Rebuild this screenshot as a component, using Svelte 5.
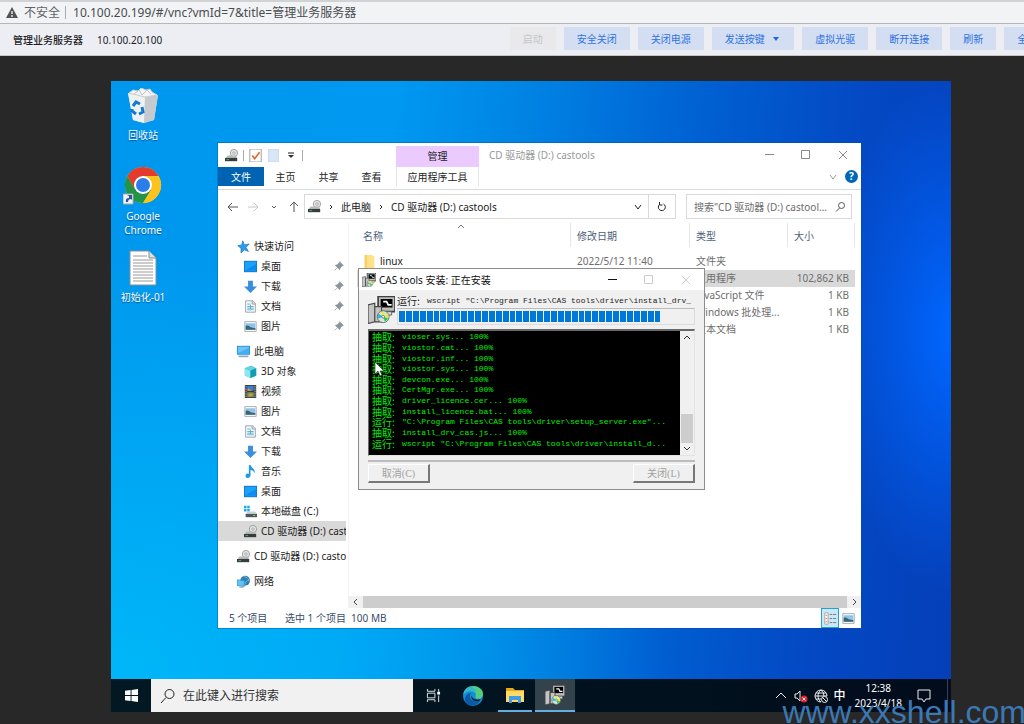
<script lang="ts">
  // Browser console for a virtual machine: address bar, VM toolbar and the
  // remote desktop with its two open windows.
  type NavItem = { icon: string; label: string; top?: boolean; pin?: boolean; active?: boolean };

  const actions = ["安全关闭", "关闭电源", "发送按键", "虚拟光驱", "断开连接", "刷新", "全屏"];

  const navGroups: NavItem[][] = [
    [
      { icon: "star", label: "快速访问", top: true },
      { icon: "desktop", label: "桌面", pin: true },
      { icon: "down", label: "下载", pin: true },
      { icon: "doc", label: "文档", pin: true },
      { icon: "picture", label: "图片", pin: true },
    ],
    [
      { icon: "pc", label: "此电脑", top: true },
      { icon: "cube", label: "3D 对象" },
      { icon: "film", label: "视频" },
      { icon: "picture", label: "图片" },
      { icon: "doc", label: "文档" },
      { icon: "down", label: "下载" },
      { icon: "music", label: "音乐" },
      { icon: "desktop", label: "桌面" },
      { icon: "disk", label: "本地磁盘 (C:)" },
      { icon: "cd", label: "CD 驱动器 (D:) castools", active: true },
    ],
    [{ icon: "cd", label: "CD 驱动器 (D:) castools", top: true }],
    [{ icon: "network", label: "网络", top: true }],
  ];

  const files = [
    { name: "linux", date: "2022/5/12 11:40", type: "文件夹", size: "" },
    { name: "", date: "", type: "应用程序", size: "102,862 KB", selected: true },
    { name: "", date: "", type: "JavaScript 文件", size: "1 KB" },
    { name: "", date: "", type: "Windows 批处理...", size: "1 KB" },
    { name: "", date: "", type: "文本文档", size: "1 KB" },
  ];

  const log = [
    ["抽取:", "vioser.sys... 100%"],
    ["抽取:", "viostor.cat... 100%"],
    ["抽取:", "viostor.inf... 100%"],
    ["抽取:", "viostor.sys... 100%"],
    ["抽取:", "devcon.exe... 100%"],
    ["抽取:", "CertMgr.exe... 100%"],
    ["抽取:", "driver_licence.cer... 100%"],
    ["抽取:", "install_licence.bat... 100%"],
    ["运行:", '"C:\\Program Files\\CAS tools\\driver\\setup_server.exe"...'],
    ["抽取:", "install_drv_cas.js... 100%"],
    ["运行:", 'wscript "C:\\Program Files\\CAS tools\\driver\\install_d...'],
  ];
  const current = 'wscript "C:\\Program Files\\CAS tools\\driver\\install_drv_';
  const blocks = Array(38);
  const progress = 89;

  let url = $state("10.100.20.199/#/vnc?vmId=7&title=管理业务服务器");
</script>

{#snippet icon(name: string)}
  <svg class="icon" viewBox="0 0 16 16" aria-hidden="true">
    {#if name === "star"}
      <path d="M7 1l2 5 6-1-4 4 3 5-5-2-4 4V10L1 7l5-1z" fill="#2f9be8" stroke="#1d7cc8" />
    {:else if name === "desktop"}
      <path d="M0 1h16v14H0z" fill="#0d74d0" />
      <path d="M1 2h14v12H1z" fill="#1ba1fa" />
      <path d="M1 13L15 5v8z" fill="#0c8cec" />
    {:else if name === "down"}
      <path d="M5 1h6v7h5l-8 8-8-8h5z" fill="#3a8ee0" />
    {:else if name === "doc"}
      <path d="M2 1h9l3 3v11H2z" fill="#f7f9fa" stroke="#8c979d" />
      <path d="M10 1v4h4" fill="#dbe1e4" stroke="#8c979d" />
      <path d="M4 5h4m-4 3h8m-8 2h8m-8 2h8M8 6v5" stroke="#4aa6cf" />
    {:else if name === "picture"}
      <path d="M1 2h14v12H1z" fill="#fff" stroke="#969da2" />
      <path d="M2 4h12v8H2z" fill="#8fc3ea" />
      <path d="M2 7q4-1 6 2l6 1v2H2z" fill="#396574" />
    {:else if name === "pc"}
      <path d="M0 1h16v11H0z" fill="#1c8fd8" />
      <path d="M1 2h14v9H1z" fill="#6cc5f6" />
      <path d="M1 10L15 3v8H1z" fill="#43aef0" />
      <path d="M2 14h12" stroke="#8fa4b4" stroke-width="2" />
    {:else if name === "cube"}
      <path d="M1 4l8-3 6 3v9l-7 3-7-3z" fill="#2bb8cb" />
      <path d="M1 4l7 3v9l-7-3z" fill="#8ce6ee" />
      <path d="M1 4l8-3 6 3-7 3z" fill="#5ed4e2" />
      <path d="M8 7l7-3v9l-7 3z" fill="#159daf" />
    {:else if name === "film"}
      <path d="M1 0h14v16H1z" fill="#39393d" />
      <path d="M4 1h8v6H4z" fill="#3a7fd0" />
      <path d="M4 9h8v6H4z" fill="#7e9b55" />
      <path d="M5 4l5 3H4zM7 10l4 2-5 2z" fill="#e79a3b" />
      <path d="M2.5 1v14m11-14v14" stroke="#d4d4d4" stroke-dasharray="2 1" />
    {:else if name === "music"}
      <path d="M6 0h2c1 4 6 4 5 10-1-3-3-4-5-4v7c0 4-7 4-6 0 0-2 2-3 4-2z" fill="#1d99ee" />
    {:else if name === "disk"}
      <path d="M0 1h3v3H0zm4 0h3v3H4zM0 5h3v3H0zm4 0h3v3H4z" fill="#18a6e6" />
      <path d="M4 8h10l2 3H2z" fill="#cdd1d3" />
      <path d="M2 11h14v4H2z" fill="#50565a" />
      <path d="M11 13h3" stroke="#56ef61" />
    {:else if name === "cd"}
      <circle cx="11" cy="5" r="4.5" fill="#e6e6e6" stroke="#8e9192" />
      <circle cx="11" cy="5" r="1.5" fill="#fff" stroke="#969696" />
      <path d="M3 8h10l2 3H1z" fill="#b7babb" />
      <path d="M0 11h15v4H0z" fill="#393c3e" />
      <path d="M2 13h3" stroke="#38d94c" />
    {:else if name === "network"}
      <circle cx="10" cy="7" r="6" fill="#2f7fb5" />
      <path d="M8 2q5 0 7 5-4-1-5 4" fill="none" stroke="#7fc3dd" />
      <path d="M0 6l9 1v7l-9-1z" fill="#5cc6f7" stroke="#3a93c4" />
      <path d="M3 15h5" stroke="#71868f" />
    {:else if name === "folder"}
      <path d="M2 0h9l3 2v14H2z" fill="#ffe18a" />
      <path d="M2 0h3v16H2z" fill="#f5cf68" />
    {:else if name === "check"}
      <path d="M1 0h14v16H1z" fill="#fff" stroke="#8e8e8e" />
      <path d="M4 8l3 4 6-8" fill="none" stroke="#e7622b" stroke-width="2" />
    {:else if name === "blank"}
      <path d="M2 0h12v16H2z" fill="#d9e6f8" stroke="#c3d2e7" />
    {:else if name === "pin"}
      <path d="M9 1l6 6-2 1-3 3-1 3-7-7 3-1 3-3zM5 11l-4 4" fill="#8b959f" stroke="#8b959f" />
    {:else if name === "details"}
      <path d="M1 1h4v14H1z" fill="#fff" stroke="#a59a94" />
      <path d="M2 4h2m-2 4h2m-2 4h2" stroke="#e26045" />
      <path d="M7 3h3m1 0h4M7 8h3m1 0h4M7 13h3m1 0h4" stroke="#5a6870" />
    {:else if name === "installer"}
      <path d="M6 0h10v9H6z" fill="#bdbdbd" stroke="#404040" />
      <path d="M7.5 1.5h7v5h-7z" fill="#000" />
      <path d="M9 3h2l1 2h2" stroke="#fff" fill="none" />
      <path d="M6 9h8v2H6z" fill="#ddd" stroke="#555" stroke-width=".5" />
      <path d="M0 5l4-1v11l-4 1zM4 6h4v9H4z" fill="#c4c4c4" stroke="#444" stroke-width=".7" />
      <circle cx="9" cy="12" r="3.5" fill="#d6e7d8" stroke="#5c665f" stroke-width=".5" />
      <path d="M9 12L7 9h3zM9 12l3-2v3z" fill="#ece94a" />
      <path d="M9 12l3 1-2 2z" fill="#28c85a" />
      <path d="M9 12l-3 1V10z" fill="#22b4e6" />
      <circle cx="9" cy="12" r=".8" fill="#fff" stroke="#555" stroke-width=".4" />
    {/if}
  </svg>
{/snippet}

{#snippet glyph(d: string)}
  <svg class="glyph" viewBox="0 0 12 12" aria-hidden="true"><path {d} /></svg>
{/snippet}

<div class="page">
  <header class="browser">
    <svg class="warn" viewBox="0 0 12 12" aria-hidden="true">
      <path d="M6 0l6 11H0z" fill="#505357" />
      <path d="M6 4v3m0 1v2" stroke="#f1f3f4" stroke-width="1.3" />
    </svg>
    <span class="insecure">不安全</span>
    <input class="url" aria-label="地址" bind:value={url} />
  </header>

  <div class="toolbar">
    <div class="vm"><strong>管理业务服务器</strong><span>10.100.20.100</span></div>
    <button class="action" disabled>启动</button>
    {#each actions as label}
      <button class="action">
        {label}
        {#if label === "发送按键"}<span class="caret"></span>{/if}
      </button>
    {/each}
  </div>

  <main class="remote">
    <div class="wallpaper">
      <div class="shortcuts">
        <button class="shortcut">
          <svg viewBox="0 0 36 36" aria-hidden="true">
            <path d="M3 5l30 2-4 25-10 3-11-3z" fill="#dfe3e5" />
            <path d="M3 5l17 4-1 26-11-3z" fill="#eef1f2" />
            <path d="M20 9l13-2-4 25-10 3z" fill="#c4cacd" />
            <path d="M4 5l4-3 5 1 3-3 5 2 4-1 2 3 5 3-12 2z" fill="#f5f5f5" stroke="#c8cdcf" />
            <path d="M9 6l5-4 3 5 5-5 4 4" fill="none" stroke="#bdc4c7" />
            <path d="M8 18l3-4 4 2m2 3l1 5-4 2m-3 0l-4-3v-2" fill="none" stroke="#1878cf" stroke-width="3" />
          </svg>
          回收站
        </button>
        <button class="shortcut chrome">
          <svg viewBox="0 0 40 40" aria-hidden="true">
            <circle cx="20" cy="20" r="18" fill="#fcc31e" />
            <path d="M4.4 11A18 18 0 0 0 20 38l8-13-8-5-8 4z" fill="#229447" />
            <path d="M20 11h15.6A18 18 0 0 1 20 38l8-13z" fill="#fcc31e" />
            <path d="M4.4 11A18 18 0 0 1 35.6 11H20l-8 13z" fill="#e33b2e" />
            <circle cx="20" cy="20" r="9" fill="#fff" />
            <circle cx="20" cy="20" r="7" fill="#2b7de9" />
            <path d="M0 29h10v10H0z" fill="#f2f2f2" stroke="#aaa" />
            <path d="M3 37q-1-4 3-4v-2l-2-1h5v5l-1-1q-3 0-3 3z" fill="#245b9d" />
          </svg>
          Google<br />Chrome
        </button>
        <button class="shortcut">
          <svg viewBox="0 0 36 36" aria-hidden="true">
            <path d="M5 1h19l7 7v27H5z" fill="#fff" stroke="#888f92" />
            <path d="M24 1v7h7" fill="#dce0e2" stroke="#888f92" />
            <path d="M8 6h14M8 10h20M8 13h20M8 16h20M8 19h20M8 22h20M8 25h20M8 28h20M8 31h20" stroke="#999" />
          </svg>
          初始化-01
        </button>
      </div>

      <section class="explorer" aria-label="CD 驱动器 (D:) castools">
        <div class="titlebar">
          <div class="quick">
            {@render icon("cd")}<i></i>{@render icon("check")}{@render icon("blank")}
            <svg class="glyph" viewBox="0 0 12 12" aria-hidden="true">
              <path d="M3 4h6" /><path d="M3 6h6L6 9z" fill="#333" stroke="none" />
            </svg><i></i>
          </div>
          <div class="manage">管理</div>
          <span class="title">CD 驱动器 (D:) castools</span>
          <div class="controls">
            <button aria-label="最小化">{@render glyph("M2 5.5h9")}</button>
            <button aria-label="最大化">{@render glyph("M1.5 1.5h8v8h-8z")}</button>
            <button aria-label="关闭">{@render glyph("M2 2l8 8M10 2l-8 8")}</button>
          </div>
        </div>

        <div class="tabs">
          <div class="tabs__main">
            <button class="tab tab--file">文件</button>
            <button class="tab">主页</button>
            <button class="tab">共享</button>
            <button class="tab">查看</button>
          </div>
          <button class="tab tab--tools">应用程序工具</button>
          <div class="tabs__help">
            <button aria-label="展开功能区">{@render glyph("M3 4l3 4 3-4")}</button>
            <button class="help" aria-label="帮助">?</button>
          </div>
        </div>

        <div class="location">
          <div class="arrows">
            <button aria-label="后退">{@render glyph("M11 6H1m4-4L1 6l4 4")}</button>
            <button aria-label="前进" disabled>{@render glyph("M1 6h10M7 2l4 4-4 4")}</button>
            <button aria-label="最近">{@render glyph("M4 5l2 2 2-2")}</button>
            <button aria-label="向上">{@render glyph("M6 11V1M2 5l4-4 4 4")}</button>
          </div>
          <div class="crumbs">
            {@render icon("cd")}
            {@render glyph("M5 4l2 2-2 2")}
            <button>此电脑</button>
            {@render glyph("M5 4l2 2-2 2")}
            <button>CD 驱动器 (D:) castools</button>
            <button class="crumbs__drop" aria-label="历史">{@render glyph("M3 4l3 4 3-4")}</button>
            <button class="crumbs__refresh" aria-label="刷新">{@render glyph("M7.5 3A3.500 3.500 0 1 1 3.500 3.500M3.500 1v3h3")}</button>
          </div>
          <div class="find">
            <input aria-label="搜索" placeholder={'搜索"CD 驱动器 (D:) castool...'} />
            {@render glyph("M10.500 4.500a3 3 0 1 1-6 0 3 3 0 0 1 6 0M5.500 7L2 10.500")}
          </div>
        </div>

        <div class="body">
          <nav class="tree">
            {#each navGroups as group}
              <ul>
                {#each group as item}
                  <li class:top={item.top} class:active={item.active}>
                    {@render icon(item.icon)}
                    <span>{item.label}</span>
                    {#if item.pin}<b>{@render icon("pin")}</b>{/if}
                  </li>
                {/each}
              </ul>
            {/each}
          </nav>
          <div class="content">
            <table>
              <thead>
                <tr>
                  <th><div>名称<span class="sort">{@render glyph("M3 7l3-3 3 3")}</span></div></th>
                  <th class="date"><div>修改日期</div></th>
                  <th class="type"><div>类型</div></th>
                  <th class="size"><div>大小</div></th>
                </tr>
              </thead>
              <tbody>
                {#each files as file}
                  <tr class:selected={file.selected}>
                    <td>
                      {#if file.name}<div class="name">{@render icon("folder")}{file.name}</div>{/if}
                    </td>
                    <td>{file.date}</td>
                    <td>{file.type}</td>
                    <td class="num">{file.size}</td>
                  </tr>
                {/each}
              </tbody>
            </table>
            <div class="hscroll">
              {@render glyph("M8 3L5 6l3 3")}<span></span>{@render glyph("M4 3l3 3-3 3")}
            </div>
          </div>
        </div>

        <footer class="status">
          <span class="status__count">5 个项目</span>
          <span>选中 1 个项目&nbsp; 100 MB</span>
          <div class="views">
            <button class="on" aria-label="详细信息">{@render icon("details")}</button>
            <button aria-label="大图标">{@render icon("picture")}</button>
          </div>
        </footer>
      </section>

      <section class="setup" aria-label="CAS tools 安装">
        <div class="setup__title">
          {@render icon("installer")}
          <span>CAS tools 安装: 正在安装</span>
          <div class="controls">
            <button class="black" aria-label="最小化">{@render glyph("M2 5.5h9")}</button>
            <button aria-label="最大化" disabled>{@render glyph("M1.5 1.5h8v8h-8z")}</button>
            <button aria-label="关闭" disabled>{@render glyph("M2 2l8 8M10 2l-8 8")}</button>
          </div>
        </div>
        <div class="setup__body">
          <div class="running">
            {@render icon("installer")}
            <div class="running__info">
              <div class="line"><span>运行:</span>{current}</div>
              <div class="bar" role="progressbar" aria-label="安装进度" aria-valuenow={progress}>
                <div class="bar__fill" style="width: {progress}%">
                  {#each blocks as _}<i></i>{/each}
                </div>
              </div>
            </div>
          </div>
          <div class="output">
            <div class="log">
              {#each log as [verb, text]}
                <div class="line"><span>{verb}</span>{text}</div>
              {/each}
            </div>
            <div class="vscroll">
              {@render glyph("M3 8l3-3 3 3")}<span></span>{@render glyph("M3 4l3 3 3-3")}
            </div>
          </div>
          <div class="setup__buttons">
            <button disabled>取消<span>(C)</span></button>
            <button disabled>关闭<span>(L)</span></button>
          </div>
        </div>
      </section>

      <svg class="cursor" viewBox="0 0 10 16" aria-hidden="true">
        <path d="M1 1v12l3-3 2 5 2-1-2-4h4z" fill="#fff" stroke="#222" stroke-width=".6" />
      </svg>
    </div>

    <footer class="taskbar">
      <button class="start" aria-label="开始">
        <svg viewBox="0 0 14 14" aria-hidden="true">
          <path d="M0 2l6-1v5.5H0zM7 1l7-1v6.5H7zM0 7.5h6V13l-6-1zM7 7.5h7V14l-7-1z" fill="#fff" />
        </svg>
      </button>
      <label class="search">
        <svg viewBox="0 0 16 16" aria-hidden="true">
          <path d="M14 6a4.5 4.5 0 1 1-9 0 4.5 4.5 0 0 1 9 0M6 9.5L1 15" fill="none" stroke="#222" />
        </svg>
        <input aria-label="搜索" placeholder="在此键入进行搜索" />
      </label>
      <button class="task" aria-label="任务视图">
        <svg viewBox="0 0 16 16" aria-hidden="true">
          <path d="M1.5 1v2.5h8V1M1.5 5.5h8v5h-8zM1.5 15v-2.5h8V15M13.5 1v3m0 4v7" fill="none" stroke="#e4e9eb" />
          <path d="M12 4h3v3h-3z" fill="#fff" />
        </svg>
      </button>
      <button class="task" aria-label="Edge">
        <svg class="big" viewBox="0 0 20 20" aria-hidden="true">
          <circle cx="10" cy="10" r="10" fill="#138bd5" />
          <path d="M0 9C1 3 5 0 10 0c6 0 10 4 10 8s-3 6-6 5c-2-1-2-2-1-3 0-5-8-7-13-1z" fill="#35b9c4" />
          <path d="M11 0c6 1 9 4 9 8 0 3-3 5-6 4-2-1-2-2-1-3 1-3 0-6-4-8z" fill="#5bd36c" opacity=".8" />
          <path d="M8 7c-3 4 0 10 9 8-3 5-9 6-13 3-4-4-2-10 4-11z" fill="#0c59a4" />
          <path d="M9 9c-1 3 3 6 9 4l-2 2c-5 1-9-2-7-6z" fill="#01121b" />
        </svg>
      </button>
      <button class="task task--open" aria-label="文件资源管理器">
        <svg class="big" viewBox="0 0 20 20" aria-hidden="true">
          <path d="M1 3h7l2 2h9v12H1z" fill="#e8a817" />
          <path d="M1 6h18v11H1z" fill="#ffda67" />
          <path d="M4 11h12v7h-3v-3H7v3H4z" fill="#3f9ce5" />
        </svg>
      </button>
      <button class="task task--active" aria-label="CAS tools 安装">{@render icon("installer")}</button>
      <div class="tray">
        <svg viewBox="0 0 14 14" aria-hidden="true"><path d="M2 9l5-5 5 5" /></svg>
        <svg viewBox="0 0 14 14" aria-hidden="true">
          <path d="M1 5h2l3-3v10L3 9H1z" />
          <circle cx="10" cy="10" r="3.5" fill="#e2202c" stroke="none" />
          <path d="M8.5 8.5l3 3m0-3l-3 3" />
        </svg>
        <svg viewBox="0 0 14 14" aria-hidden="true">
          <path d="M13 7A6 6 0 1 0 7 13M1 7h12M2 4h10M2 10h5M7 1C3 4 3 10 7 13M7 1q3 2 3 6" />
          <circle cx="10.5" cy="10.5" r="3" fill="#01121b" /><path d="M8.5 8.5l4 4" />
        </svg>
        <span class="ime">中</span>
        <time>12:38<br />2023/4/18</time>
        <svg viewBox="0 0 14 14" aria-hidden="true"><path d="M1 1h12v9H9l-2 3-2-3H1z" /></svg>
      </div>
    </footer>
  </main>

  <div class="watermark">www.xxshell.com</div>
</div>

<style>
  :global(body) {
    margin: 0;
    background: #282828;
  }
  .page {
    position: relative;
    min-height: 100vh;
    overflow: hidden;
    background: #282828;
    font: 10px / 14px "Noto Sans", "Noto Sans CJK SC", sans-serif;
    color: #1c1c1c;
  }
  .page * {
    box-sizing: border-box;
  }
  button,
  input {
    font: inherit;
    color: inherit;
    margin: 0;
    padding: 0;
    border: 0;
    background: none;
    white-space: nowrap;
  }
  input {
    min-width: 0;
    outline: none;
  }
  ul {
    list-style: none;
    margin: 0;
    padding: 0;
  }
  svg {
    display: block;
    flex: none;
  }
  .icon {
    width: 13px;
    height: 13px;
  }
  .glyph {
    width: 12px;
    height: 12px;
    fill: none;
    stroke: currentColor;
  }

  .browser {
    display: flex;
    align-items: center;
    height: 24px;
    padding-left: 6px;
    border-top: 2px solid #d0d2d4;
    border-bottom: 1px solid #b5b7b9;
    background: #f1f3f4;
    font-size: 12px;
    color: #5f6368;
  }
  .warn {
    width: 12px;
    height: 12px;
    margin-right: 6px;
  }
  .insecure {
    padding-right: 5px;
    border-right: 1px solid #a9acb0;
    line-height: 13px;
  }
  .url {
    flex: 1;
    padding-left: 7px;
    color: #4a4d51;
  }

  .toolbar {
    display: flex;
    align-items: flex-start;
    gap: 8px;
    height: 32px;
    padding-top: 3px;
    border-bottom: 1px solid #c4c5ca;
    background: #edeef4;
  }
  .vm {
    display: flex;
    flex: none;
    gap: 14px;
    width: 49%;
    padding-left: 13px;
    line-height: 27px;
  }
  .vm strong {
    font-weight: 500;
  }
  .action {
    flex: none;
    height: 23px;
    padding: 0 13px;
    background: #d4def2;
    color: #2f73e2;
  }
  .action:disabled {
    background: #e9e9eb;
    color: #c4c5c8;
  }
  .caret {
    display: inline-block;
    margin: 0 2px 2px 6px;
    border: 3px solid transparent;
    border-top: 4px solid #1f67df;
    border-bottom: 0;
  }

  .remote {
    margin: 25px 73px 12px 111px;
  }
  .wallpaper {
    position: relative;
    height: 598px;
    background:
      radial-gradient(ellipse 120px 260px at 100% 42%, #0066ff 0%, rgba(0, 96, 255, 0) 100%),
      radial-gradient(ellipse 560px 420px at 0% 100%, rgba(0, 186, 250, 0.9), rgba(0, 180, 250, 0)),
      linear-gradient(96deg, #0098ee 0%, #0098f0 32%, #0084e4 46%, #0060d2 66%, #0448c4 84%, #043fb8 100%);
  }
  .shortcuts {
    display: flex;
    flex-direction: column;
    align-items: center;
    gap: 23px;
    width: 64px;
    padding-top: 7px;
    color: #fff;
  }
  .shortcut {
    text-shadow: 0 1px 1px rgba(0, 40, 90, 0.6);
  }
  .shortcut svg {
    width: 36px;
    height: 36px;
    margin: 0 auto 4px;
  }
  .shortcut.chrome {
    margin-bottom: -10px;
  }
  .shortcut.chrome svg {
    width: 40px;
    height: 40px;
  }

  .controls {
    display: flex;
    margin-left: auto;
    color: #8a8a8a;
  }
  .controls button {
    width: 37px;
    display: flex;
    justify-content: center;
  }
  .controls button:disabled {
    color: #ccc;
  }
  .controls .black {
    color: #111;
  }

  .explorer {
    position: absolute;
    left: 107px;
    top: 62px;
    width: 643px;
    background: #fff;
    box-shadow: 0 0 0 1px rgba(0, 80, 160, 0.4);
  }
  .titlebar {
    display: flex;
    align-items: center;
    height: 24px;
  }
  .quick {
    display: flex;
    align-items: center;
    gap: 5px;
    width: 178px;
    padding-left: 7px;
  }
  .quick i {
    width: 1px;
    height: 11px;
    background: #aaa;
  }
  .manage {
    align-self: flex-end;
    width: 83px;
    height: 21px;
    line-height: 21px;
    text-align: center;
    background: #ebcbff;
  }
  .title {
    padding-left: 10px;
    color: #999;
  }
  .tabs {
    display: flex;
    height: 23px;
    padding-bottom: 3px;
    border-bottom: 1px solid #dadbdc;
  }
  .tabs__main {
    display: flex;
    width: 178px;
  }
  .tab {
    width: 43px;
  }
  .tab--file {
    width: 46px;
    background: #0063b1;
    color: #fff;
  }
  .tab--tools {
    width: 83px;
    border: 1px solid #e5e5e5;
    border-width: 0 1px;
  }
  .tabs__help {
    display: flex;
    align-items: center;
    gap: 6px;
    margin-left: auto;
    padding-right: 3px;
    color: #999;
  }
  .help {
    width: 13px;
    height: 13px;
    border-radius: 50%;
    background: #0067b8;
    color: #fff;
    font-weight: 700;
    line-height: 13px;
  }
  .location {
    display: flex;
    height: 33px;
    padding: 4px 9px 4px 0;
  }
  .arrows {
    display: flex;
    align-items: center;
    justify-content: space-between;
    width: 86px;
    padding: 0 4px 0 9px;
    color: #555;
  }
  .arrows button:disabled {
    color: #c8c8c8;
  }
  .crumbs,
  .find {
    display: flex;
    align-items: center;
    border: 1px solid #d9d9d9;
  }
  .crumbs {
    flex: 1;
    gap: 4px;
    padding-left: 3px;
    color: #222;
  }
  .crumbs__drop {
    margin-left: auto;
  }
  .crumbs__refresh {
    align-self: stretch;
    width: 27px;
    padding: 0 7px;
    border-left: 1px solid #d9d9d9;
  }
  .find {
    width: 166px;
    margin-left: 10px;
    padding: 0 5px 0 7px;
    color: #555;
  }
  .find input {
    flex: 1;
  }
  input::placeholder {
    color: #6d6d6d;
    opacity: 1;
  }

  .body {
    display: flex;
  }
  .tree {
    display: flex;
    flex-direction: column;
    gap: 5px;
    width: 131px;
    padding: 13px 2px 17px 0;
    border-right: 1px solid #f2f2f2;
  }
  .tree li {
    display: flex;
    align-items: center;
    gap: 4px;
    height: 20px;
    padding-left: 26px;
    overflow: hidden;
    white-space: nowrap;
  }
  .tree .top {
    padding-left: 19px;
  }
  .tree .active {
    background: #d9d9d9;
  }
  .tree b {
    margin-left: auto;
    padding-right: 2px;
  }
  .tree b .icon {
    width: 10px;
    height: 10px;
  }
  .content {
    display: flex;
    flex: 1;
    flex-direction: column;
    justify-content: space-between;
    min-width: 0;
  }
  table {
    table-layout: fixed;
    border-spacing: 0;
    margin: 0 6px 0 8px;
    color: #6d6d6d;
  }
  th {
    height: 30px;
    padding: 0;
    vertical-align: top;
    text-align: left;
    font-weight: 400;
    color: #4c607a;
  }
  th div {
    position: relative;
    height: 24px;
    padding-left: 6px;
    border-right: 1px solid #e5e5e5;
    line-height: 26px;
  }
  .sort {
    position: absolute;
    left: 46%;
    top: -2px;
    color: #777;
  }
  .date {
    width: 119px;
  }
  .type {
    width: 98px;
  }
  .size {
    width: 67px;
  }
  td {
    height: 17px;
    padding: 0 6px;
    line-height: 17px;
    white-space: nowrap;
  }
  .selected td {
    background: #d9d9d9;
  }
  .name {
    display: flex;
    align-items: center;
    gap: 4px;
    color: #222;
  }
  .num {
    text-align: right;
  }
  .hscroll {
    display: flex;
    align-items: center;
    height: 12px;
    background: #f0f0f0;
    color: #444;
  }
  .hscroll span {
    flex: 1;
    height: 12px;
    margin: 0 2px;
    background: #cdcdcd;
  }
  .status {
    display: flex;
    align-items: center;
    height: 20px;
    padding-left: 11px;
    color: #374d6b;
  }
  .status__count {
    width: 56px;
  }
  .views {
    display: flex;
    align-self: stretch;
    gap: 3px;
    margin-left: auto;
    padding-right: 6px;
  }
  .views .on {
    width: 18px;
    padding: 0 2px;
    border: 1px solid #26a0da;
    background: #cbe8f6;
  }

  .setup {
    position: absolute;
    left: 247px;
    top: 187px;
    width: 347px;
    border: 1px solid #8c8c8c;
    background: #f0f0f0;
  }
  .setup__title {
    display: flex;
    align-items: center;
    gap: 3px;
    height: 21px;
    padding-left: 3px;
    background: #fff;
    color: #111;
  }
  .setup__title .icon {
    width: 14px;
    height: 14px;
  }
  .setup__body {
    padding: 6px 9px 6px;
  }
  .running {
    display: flex;
    gap: 2px;
    height: 33px;
  }
  .running > .icon {
    width: 27px;
    height: 28px;
  }
  .running__info {
    flex: 1;
    min-width: 0;
  }
  .line {
    display: flex;
    align-items: center;
    overflow: hidden;
    font: 8px / 10px "Liberation Mono", monospace;
    white-space: pre;
  }
  .line span {
    flex: none;
    width: 30px;
    font: 10px / 10px "Noto Sans CJK SC", sans-serif;
  }
  .bar {
    margin-top: 2px;
    padding: 2px 1px;
    border: 1px solid #dcdcdc;
    border-top-color: #bbb;
  }
  .bar__fill {
    display: flex;
    gap: 1px;
    height: 11px;
  }
  .bar__fill i {
    flex: 1;
    background: #0078d7;
  }
  .output {
    display: flex;
    height: 127px;
    border: 1px solid #e3e3e3;
    border-top: 2px solid #696969;
    border-left-color: #696969;
  }
  .log {
    display: grid;
    grid-auto-rows: 1fr;
    flex: 1;
    min-width: 0;
    padding: 1px 3px 6px;
    background: #000;
    color: #00ee00;
  }
  .vscroll {
    display: flex;
    flex-direction: column;
    justify-content: space-between;
    align-items: center;
    width: 14px;
    background: #f0f0f0;
    color: #333;
  }
  .vscroll span {
    width: 12px;
    height: 29px;
    margin-top: auto;
    background: #cdcdcd;
  }
  .setup__buttons {
    display: flex;
    justify-content: space-between;
    margin-top: 4px;
    padding-top: 2px;
    border-top: 2px solid #bcbcbc;
  }
  .setup__buttons button {
    width: 62px;
    height: 19px;
    border: 1px solid #fff;
    border-right: 2px solid #777;
    border-bottom: 2px solid #777;
    color: #a0a0a0;
  }
  .setup__buttons span {
    font-family: "Liberation Serif", serif;
  }
  .cursor {
    position: absolute;
    left: 263px;
    top: 280px;
    width: 10px;
    height: 16px;
  }

  .taskbar {
    display: flex;
    height: 33px;
    background: linear-gradient(90deg, #021923, #01121e 60%, #020c1c);
    color: #fff;
  }
  .start {
    width: 40px;
  }
  .start svg {
    width: 13px;
    height: 13px;
    margin: auto;
  }
  .search {
    display: flex;
    align-items: center;
    gap: 7px;
    width: 262px;
    padding-left: 9px;
    background: #f1f1f1;
    font-size: 12px;
    color: #222;
  }
  .search svg {
    width: 16px;
    height: 16px;
  }
  .search input::placeholder {
    color: #333;
  }
  .task {
    display: flex;
    align-items: center;
    justify-content: center;
    width: 40px;
  }
  .task svg {
    width: 15px;
    height: 15px;
  }
  .task .icon,
  .task .big {
    width: 20px;
    height: 20px;
  }
  .task--open {
    width: 34px;
    margin: 0 3px 0 5px;
    border-bottom: 2px solid #62aee3;
  }
  .task--active {
    border-bottom: 2px solid #62aee3;
    background: #33424b;
  }
  .tray {
    display: flex;
    align-items: center;
    gap: 6px;
    margin-left: auto;
    margin-right: 3px;
    padding-right: 16px;
    border-right: 1px solid #354150;
  }
  .tray svg {
    width: 14px;
    height: 14px;
    fill: none;
    stroke: #eee;
  }
  .ime {
    font-size: 12px;
    font-weight: 500;
  }
  time {
    text-align: center;
    padding: 0 9px 0 3px;
    line-height: 15px;
  }
  .watermark {
    position: absolute;
    right: -2px;
    bottom: -7px;
    font: 32px / 37px "Liberation Sans", sans-serif;
    color: #3c78b4;
  }
</style>
